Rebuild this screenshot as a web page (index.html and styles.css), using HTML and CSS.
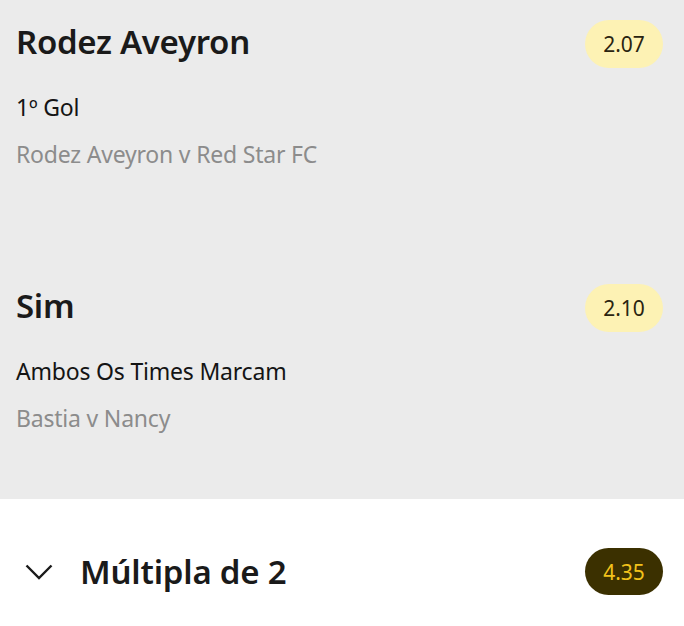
FILE: index.html
```html
<!DOCTYPE html>
<html lang="pt">
<head>
<meta charset="utf-8">
<link rel="stylesheet" href="styles.css">
</head>
<body>
<div class="selections">
  <section class="bet bet-first">
    <div class="bet-head">
      <h2 class="bet-title">Rodez Aveyron</h2>
      <span class="odds">2.07</span>
    </div>
    <div class="bet-market">1º Gol</div>
    <div class="bet-event">Rodez Aveyron v Red Star FC</div>
  </section>
  <section class="bet bet-last">
    <div class="bet-head">
      <h2 class="bet-title">Sim</h2>
      <span class="odds">2.10</span>
    </div>
    <div class="bet-market">Ambos Os Times Marcam</div>
    <div class="bet-event">Bastia v Nancy</div>
  </section>
</div>
<div class="multi">
  <div class="multi-left">
    <svg class="chevron" width="28" height="16" viewBox="0 0 28 16"><path d="M1.5 1.5 L14 14 L26.5 1.5" fill="none" stroke="#1a1a1a" stroke-width="2.4"/></svg>
    <span class="multi-title">Múltipla de 2</span>
  </div>
  <span class="odds odds-dark">4.35</span>
</div>
</body>
</html>
```
FILE: styles.css
```css
* { box-sizing: border-box; }
html, body { margin: 0; padding: 0; }
body {
  width: 684px;
  height: 626px;
  overflow: hidden;
  background: #ffffff;
  font-family: "Noto Sans", "Open Sans", sans-serif;
  color: #1a1a1a;
}
.selections { background: #ebebeb; }
.bet {
  padding: 20px 21px 0 16px;
}
.bet-first { height: 264px; }
.bet-last { height: 235px; }
.bet-head {
  display: flex;
  justify-content: space-between;
  align-items: center;
  height: 48px;
}
.bet-title {
  margin: 0 0 5px 0;
  font-size: 33px;
  font-weight: 600;
  letter-spacing: -0.3px;
  line-height: 42px;
}
.odds {
  display: inline-flex;
  align-items: center;
  justify-content: center;
  width: 78px;
  height: 48px;
  border-radius: 24px;
  background: #fdf2b4;
  color: #2a2410;
  font-size: 21px;
}
.bet-market {
  margin-top: 24px;
  font-size: 23px;
  line-height: 30px;
  color: #141414;
  letter-spacing: -0.2px;
}
.bet-event {
  margin-top: 17px;
  font-size: 23px;
  line-height: 30px;
  color: #8c8c8c;
  letter-spacing: -0.2px;
}
.multi {
  display: flex;
  justify-content: space-between;
  align-items: center;
  padding: 49px 21px 0 25px;
}
.multi-left {
  display: flex;
  align-items: center;
  gap: 27px;
}
.chevron { display: block; }
.multi-title {
  font-size: 33px;
  font-weight: 600;
  letter-spacing: -0.2px;
  line-height: 47px;
}
.odds-dark {
  height: 47px;
  background: #3b3000;
  color: #f2c21b;
}
```
